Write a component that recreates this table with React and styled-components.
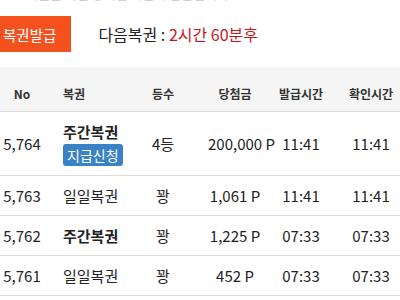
import styled, { createGlobalStyle } from "styled-components";

const GlobalStyle = createGlobalStyle`
  body {
    margin: 0;
    background: #fff;
    font-family: "Noto Sans CJK KR", "Noto Sans", sans-serif;
    color: #222;
  }
`;

const Page = styled.div`
  width: 400px;
  height: 300px;
  overflow: hidden;
`;

// last line of the notice above, scrolled mostly out of view
const Notice = styled.div`
  height: 3px;
  overflow: hidden;
  padding-left: 26px;
  color: #cfcfcf;
  font-size: 13px;
  line-height: 16px;

  span {
    display: block;
    margin-top: -14px;
  }
`;

const Toolbar = styled.div`
  display: flex;
  align-items: center;
  gap: 27px;
  margin-top: 13px;
`;

const IssueButton = styled.button`
  height: 36px;
  padding: 0 15px 0 3px;
  border: none;
  background: #f4511e;
  color: #fff;
  font-family: inherit;
  font-size: 14.5px;
`;

const NextInfo = styled.div`
  font-size: 16px;
  color: #222;
  white-space: pre;

  em {
    font-style: normal;
    color: #c8161d;
  }
`;

const Table = styled.div`
  margin-top: 15px;
  width: 414px;
`;

const cols = "44px 86px 66px 78px 54px 86px";

const HeadRow = styled.div`
  display: grid;
  grid-template-columns: ${cols};
  height: 45px;
  align-items: end;
  padding-bottom: 9px;
  box-sizing: border-box;
  background: #f5f5f5;
  border-bottom: 1px solid #dcdcdc;
  font-size: 12px;
  font-weight: 700;
  color: #333;
`;

const Row = styled.div`
  display: grid;
  grid-template-columns: ${cols};
  height: ${(p) => (p.tall ? 63 : 39)}px;
  align-items: center;
  border-bottom: 1px solid #dcdcdc;
  font-size: 15px;
  color: #222;
`;

const Cell = styled.div`
  display: flex;
  flex-direction: column;
  align-items: ${(p) => (p.left ? "flex-start" : "safe center")};
  padding: 0 ${(p) => p.px || 0}px 0 ${(p) => p.pl ?? p.px ?? 0}px;
  white-space: nowrap;
  min-width: 0;
`;

const TicketName = styled.div`
  font-weight: ${(p) => (p.bold ? 700 : 400)};
  line-height: 20px;
`;

const ClaimBadge = styled.span`
  display: inline-block;
  margin-top: 2px;
  padding: 0 4px;
  height: 22px;
  line-height: 22px;
  border-radius: 3px;
  background: #3a82c6;
  color: #fff;
  font-size: 14px;
`;

const rows = [
  { no: "5,764", name: "주간복권", bold: true, claim: true, rank: "4등", prize: "200,000 P", issued: "11:41", checked: "11:41" },
  { no: "5,763", name: "일일복권", rank: "꽝", prize: "1,061 P", issued: "11:41", checked: "11:41" },
  { no: "5,762", name: "주간복권", bold: true, rank: "꽝", prize: "1,225 P", issued: "07:33", checked: "07:33" },
  { no: "5,761", name: "일일복권", rank: "꽝", prize: "452 P", issued: "07:33", checked: "07:33" },
];

export default function App() {
  return (
    <Page>
      <GlobalStyle />
      <Notice>
        <span>복권은 매일 정해진 시간에 발급됩니다.</span>
      </Notice>
      <Toolbar>
        <IssueButton>복권발급</IssueButton>
        <NextInfo>
          {"다음복권 : "}
          <em>2시간 60분후</em>
        </NextInfo>
      </Toolbar>
      <Table>
        <HeadRow>
          <Cell>No</Cell>
          <Cell left pl={19}>복권</Cell>
          <Cell>등수</Cell>
          <Cell px={12}>당첨금</Cell>
          <Cell>발급시간</Cell>
          <Cell>확인시간</Cell>
        </HeadRow>
        {rows.map((r) => (
          <Row key={r.no} tall={r.claim}>
            <Cell>{r.no}</Cell>
            <Cell left pl={19}>
              <TicketName bold={r.bold}>{r.name}</TicketName>
              {r.claim && <ClaimBadge>지급신청</ClaimBadge>}
            </Cell>
            <Cell>{r.rank}</Cell>
            <Cell px={12}>{r.prize}</Cell>
            <Cell>{r.issued}</Cell>
            <Cell>{r.checked}</Cell>
          </Row>
        ))}
      </Table>
    </Page>
  );
}
